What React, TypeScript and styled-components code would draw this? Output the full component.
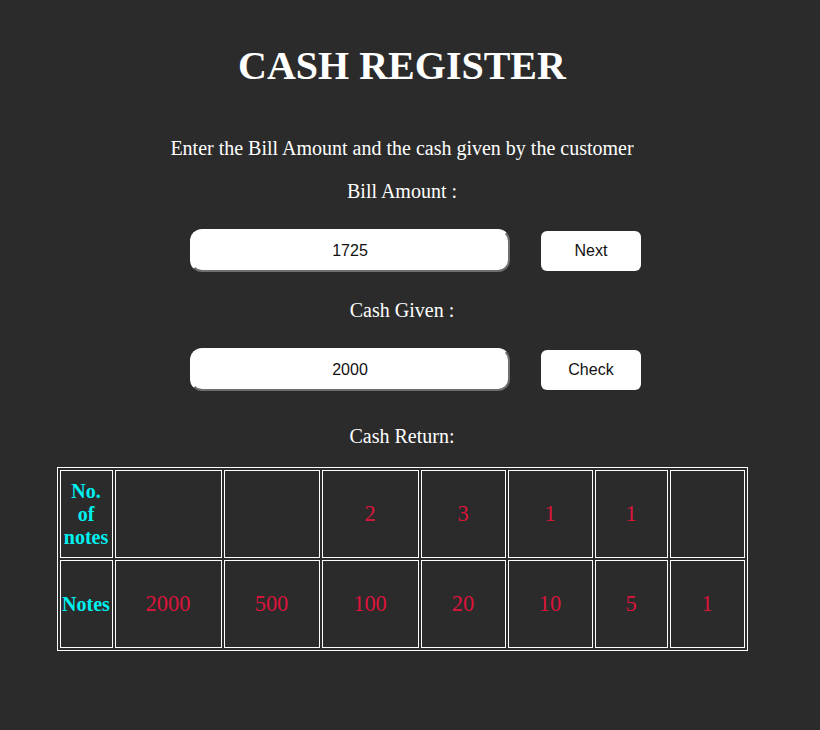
import React from "react";
import styled, { createGlobalStyle } from "styled-components";

const Global = createGlobalStyle`
  html, body {
    margin: 0;
    padding: 0;
    background: #2b2b2b;
  }
  body {
    font-family: "Liberation Serif", "Times New Roman", serif;
    color: #ffffff;
  }
`;

const Page = styled.main`
  width: 804px;
  min-height: 730px;
  display: flex;
  flex-direction: column;
  align-items: center;
  text-align: center;
`;

const Title = styled.h1`
  margin: 42px 0 0;
  font-size: 40px;
  line-height: 48px;
  font-weight: bold;
`;

const Intro = styled.p`
  margin: 46px 0 0;
  font-size: 20px;
  line-height: 24px;
`;

const Label = styled.label<{ $gap: number }>`
  display: block;
  margin-top: ${(p) => p.$gap}px;
  font-size: 20px;
  line-height: 24px;
`;

const Row = styled.div`
  display: flex;
  align-items: center;
  gap: 31px;
  margin-top: 26px;
  padding-left: 27px;
`;

const Input = styled.input`
  box-sizing: border-box;
  width: 320px;
  height: 43px;
  border: 2px solid;
  border-color: #ffffff #6e6e6e #6e6e6e #ffffff;
  border-radius: 12px;
  background: #ffffff;
  font-family: "Liberation Sans", Arial, sans-serif;
  font-size: 16px;
  color: #111;
  text-align: center;
  outline: none;
`;

const Button = styled.button`
  width: 100px;
  height: 40px;
  border: none;
  border-radius: 6px;
  background: #ffffff;
  font-family: "Liberation Sans", Arial, sans-serif;
  font-size: 16px;
  color: #111;
  cursor: pointer;
`;

const Table = styled.table`
  margin-top: 19px;
  width: 690px;
  table-layout: fixed;
  border: 1px solid #ffffff;
  border-spacing: 2px;
`;

const Cell = styled.td<{ $w?: number }>`
  box-sizing: border-box;
  ${(p) => (p.$w ? `width: ${p.$w}px;` : "")}
  height: 88px;
  border: 1px solid #ffffff;
  padding: 1px;
  text-align: center;
  vertical-align: middle;
  font-size: 22.4px;
  color: #dc143c;
`;

const HeadCell = styled.th<{ $w?: number }>`
  box-sizing: border-box;
  ${(p) => (p.$w ? `width: ${p.$w}px;` : "")}
  height: 88px;
  border: 1px solid #ffffff;
  padding: 1px;
  text-align: center;
  vertical-align: middle;
  font-size: 20px;
  line-height: 23px;
  font-weight: bold;
  color: #00f0f0;
`;

const widths = [107, 96, 97, 85, 85, 73, 75];
const counts = ["", "", "2", "3", "1", "1", ""];
const notes = ["2000", "500", "100", "20", "10", "5", "1"];

export default function App() {
  return (
    <>
      <Global />
      <Page>
        <Title>CASH REGISTER</Title>
        <Intro>Enter the Bill Amount and the cash given by the customer</Intro>
        <Label $gap={19}>Bill Amount :</Label>
        <Row>
          <Input defaultValue="1725" />
          <Button>Next</Button>
        </Row>
        <Label $gap={26}>Cash Given :</Label>
        <Row>
          <Input defaultValue="2000" />
          <Button>Check</Button>
        </Row>
        <Label $gap={33}>Cash Return:</Label>
        <Table>
          <tbody>
            <tr>
              <HeadCell $w={53}>No. of notes</HeadCell>
              {counts.map((c, i) => (
                <Cell key={i} $w={widths[i]}>
                  {c}
                </Cell>
              ))}
            </tr>
            <tr>
              <HeadCell>Notes</HeadCell>
              {notes.map((n, i) => (
                <Cell key={i}>{n}</Cell>
              ))}
            </tr>
          </tbody>
        </Table>
      </Page>
    </>
  );
}
